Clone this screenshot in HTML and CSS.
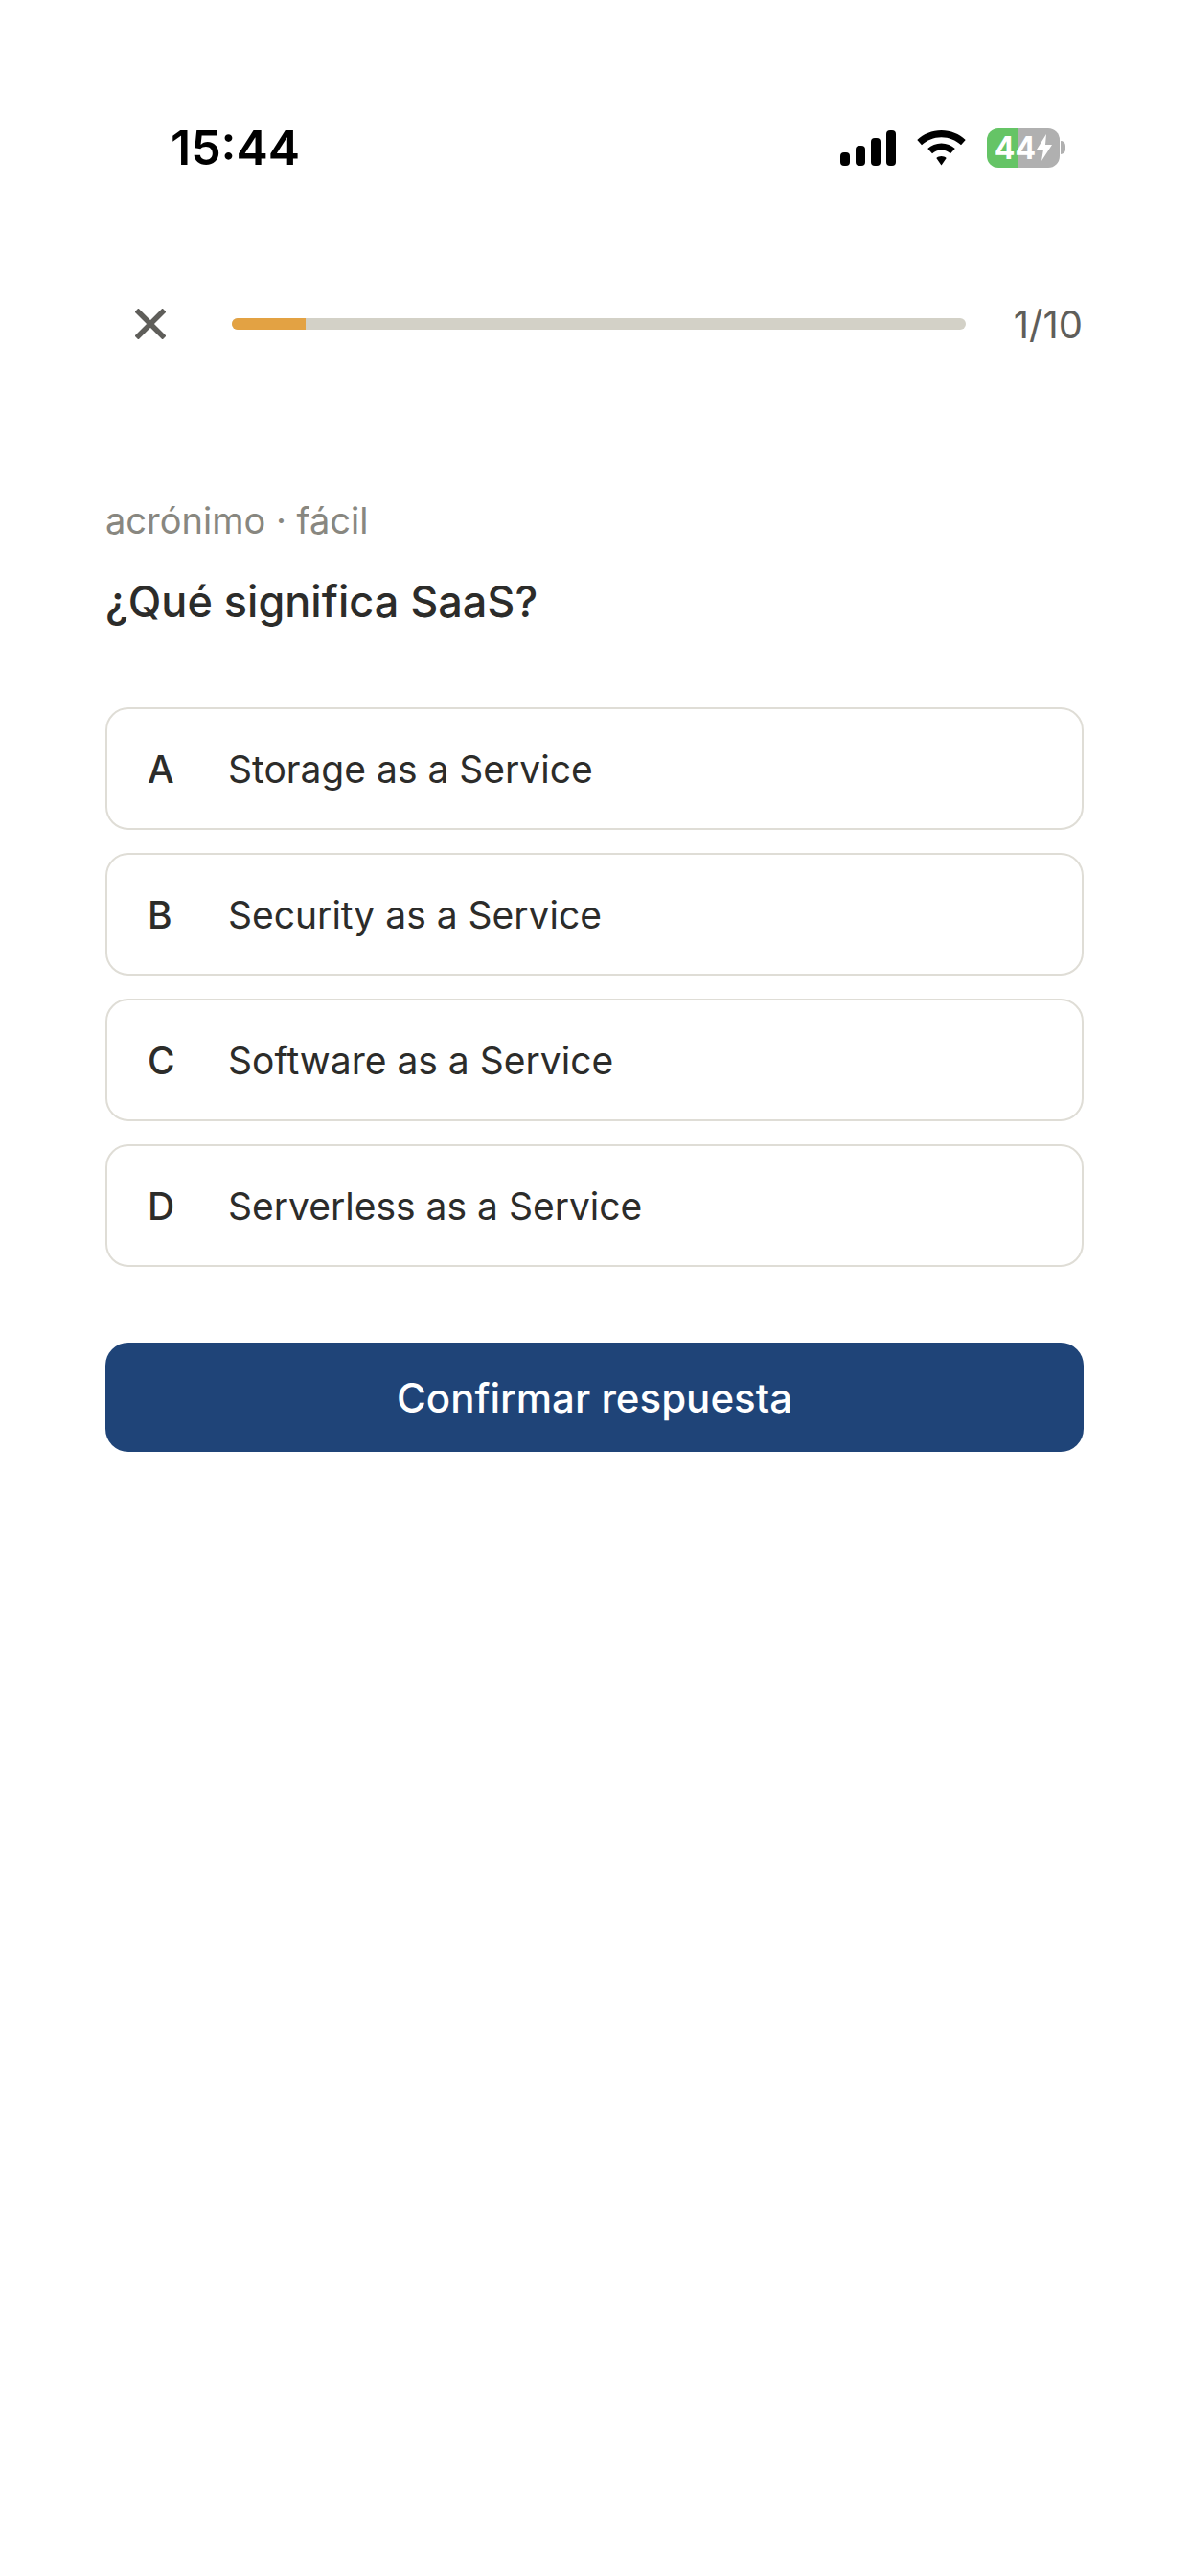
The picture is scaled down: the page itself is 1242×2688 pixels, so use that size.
FILE: index.html
```html
<!DOCTYPE html>
<html lang="es">
<head>
    <meta charset="UTF-8" />
    <meta name="viewport" content="width=device-width, initial-scale=1.0"/>
    <title>Quiz</title>
    <link rel="stylesheet" href="styles.css">
</head>
<body>
    <header class="status-bar">
        <div class="status-time">15:44</div>
        <div class="status-icons">
            <svg class="icon-signal" width="58" height="37" viewBox="0 0 58 37" fill="#000">
                <rect x="0" y="23" width="10" height="14" rx="4"/>
                <rect x="16" y="16" width="10" height="21" rx="4"/>
                <rect x="32" y="8" width="10" height="29" rx="4"/>
                <rect x="48" y="0" width="10" height="37" rx="4"/>
            </svg>
            <svg class="icon-wifi" width="51" height="37" viewBox="0 0 51 37" fill="#000">
                <path d="M25.5 0C35.2 0 44.1 3.8 50.7 10L46 15.2C40.6 10.2 33.4 7.2 25.5 7.2S10.400 10.200 5 15.200L.3 10C6.900 3.800 15.800 0 25.500 0Z"/>
                <path d="M25.500 13.500C31 13.500 36 15.600 39.800 19L35 24.300C32.500 22 29.200 20.600 25.500 20.600S18.500 22 16 24.300L11.200 19C15 15.600 20 13.500 25.500 13.500Z"/>
                <path d="M25.500 27C27.500 27 29.300 27.700 30.700 28.900L25.500 36.500L20.300 28.900C21.700 27.700 23.500 27 25.500 27Z"/>
            </svg>
            <div class="battery">
                <div class="battery-body">
                    <span class="battery-level">44</span>
                    <svg class="icon-bolt" width="16" height="28" viewBox="0 0 16 28" fill="#fff">
                        <path d="M10 0L0 16H7L5 28L16 11H9Z"/>
                    </svg>
                </div>
                <div class="battery-tip"></div>
            </div>
        </div>
    </header>

    <div class="quiz-top">
        <svg class="icon-close" width="32" height="32" viewBox="0 0 32 32" fill="none" stroke="#5f5e5a" stroke-width="5.500">
            <path d="M1.500 1.500L30.500 30.500M30.500 1.500L1.500 30.500"/>
        </svg>
        <div class="progress">
            <div class="progress-fill" style="width: 10%"></div>
        </div>
        <div class="progress-count">1/10</div>
    </div>

    <main class="quiz">
        <p class="quiz-meta">acrónimo · fácil</p>
        <h1 class="quiz-question">¿Qué significa SaaS?</h1>

        <div class="options">
            <div class="option"><span class="option-key">A</span><span>Storage as a Service</span></div>
            <div class="option"><span class="option-key">B</span><span>Security as a Service</span></div>
            <div class="option"><span class="option-key">C</span><span>Software as a Service</span></div>
            <div class="option"><span class="option-key">D</span><span>Serverless as a Service</span></div>
        </div>

        <button class="confirm" type="button">Confirmar respuesta</button>
    </main>
</body>
</html>
```

FILE: styles.css
```css
* {
    margin: 0;
    padding: 0;
    box-sizing: border-box;
}

body {
    font-family: 'Inter', sans-serif;
    background-color: #fff;
    color: #2c2c2a;
    height: 2688px;
    overflow: hidden;
}

/* Status bar */
.status-bar {
    display: flex;
    justify-content: space-between;
    align-items: center;
    height: 60px;
    margin-top: 124px;
    padding: 0 130px 0 178px;
}

.status-time {
    font-size: 50px;
    font-weight: 600;
    color: #000;
}

.status-icons {
    display: flex;
    align-items: center;
    gap: 22px;
}

.battery {
    display: flex;
    align-items: center;
    gap: 1px;
}

.battery-body {
    display: flex;
    align-items: center;
    justify-content: center;
    gap: 1px;
    width: 76px;
    height: 41px;
    border-radius: 12px;
    background: linear-gradient(to right, #65c466 42%, #b0b0b0 42%);
}

.battery-level {
    font-size: 32px;
    font-weight: 700;
    color: #fff;
}

.battery-tip {
    width: 5px;
    height: 14px;
    border-radius: 0 7px 7px 0;
    background-color: #b0b0b0;
}

/* Progress row */
.quiz-top {
    display: flex;
    align-items: center;
    height: 60px;
    margin-top: 124px;
    padding: 0 112px 0 141px;
}

.progress {
    flex: 1;
    height: 12px;
    margin: 0 50px 0 69px;
    border-radius: 6px;
    background-color: #d3d1c7;
    overflow: hidden;
}

.progress-fill {
    height: 100%;
    background-color: #e3a243;
}

.progress-count {
    font-size: 40px;
    color: #5f5e5a;
}

/* Question */
.quiz {
    padding: 0 111px 0 110px;
}

.quiz-meta {
    margin-top: 150px;
    font-size: 38px;
    line-height: 50px;
    color: #888780;
}

.quiz-question {
    margin-top: 30px;
    font-size: 45px;
    font-weight: 500;
    line-height: 60px;
}

.options {
    display: flex;
    flex-direction: column;
    gap: 24px;
    margin-top: 80px;
}

.option {
    display: flex;
    align-items: center;
    height: 128px;
    padding-left: 42px;
    border: 2px solid #dfddd6;
    border-radius: 24px;
    font-size: 39px;
}

.option-key {
    width: 84px;
    font-weight: 500;
}

.confirm {
    display: block;
    width: 100%;
    height: 114px;
    margin-top: 79px;
    border: none;
    border-radius: 24px;
    background-color: #1f4478;
    color: #fff;
    font-family: inherit;
    font-size: 42px;
    font-weight: 500;
}
```
